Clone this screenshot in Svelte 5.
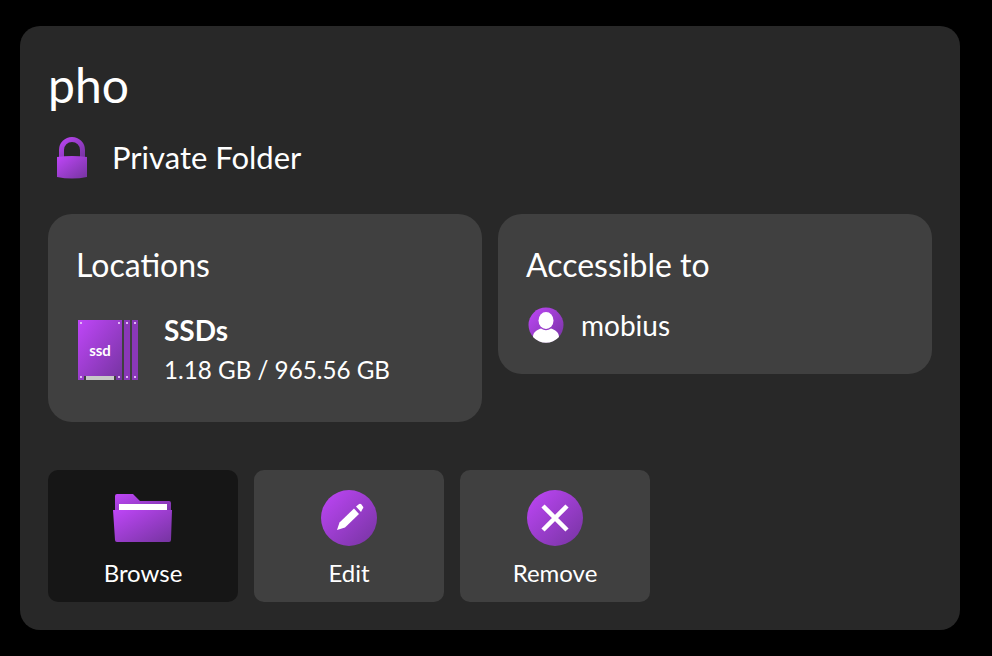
<script lang="ts">
  const actions = [
    { label: 'Browse', icon: 'folder', active: true },
    { label: 'Edit', icon: 'edit', active: false },
    { label: 'Remove', icon: 'remove', active: false }
  ]
</script>

<svg class="defs" width="0" height="0" aria-hidden="true">
  <defs>
    <linearGradient id="purple" x1="0" y1="0" x2="1" y2="1">
      <stop offset="0" stop-color="#bf46f8" />
      <stop offset="1" stop-color="#7534a0" />
    </linearGradient>
  </defs>
</svg>

<main class="page">
  <section class="card">
    <h1 class="title">pho</h1>

    <div class="privacy">
      <svg class="lock" width="32" height="44" viewBox="0 0 32 44">
        <path d="M3 22 V15 a13 13 0 0 1 26 0 V22 h-5 V15 a8 8 0 0 0 -16 0 V22 Z" fill="url(#purple)" />
        <path d="M1 22 Q16 20 31 22 V42 Q16 45 1 42 Z" fill="url(#purple)" />
      </svg>
      <span>Private Folder</span>
    </div>

    <div class="panels">
      <div class="panel locations">
        <h2>Locations</h2>
        <div class="location">
          <svg width="62" height="62" viewBox="0 0 62 62">
            <rect x="1" y="1" width="44" height="60" fill="url(#purple)" />
            <rect x="47" y="1" width="6" height="60" fill="#8a38b8" />
            <rect x="55" y="1" width="6" height="60" fill="#8a38b8" />
            <rect x="9" y="57" width="28" height="4" fill="#c8c8c8" />
            <rect x="7" y="57" width="2" height="4" fill="#404040" />
            <rect x="37" y="57" width="2" height="4" fill="#404040" />
            <g fill="#e0b6f5">
              <rect x="3" y="3" width="2" height="2" /><rect x="41" y="3" width="2" height="2" />
              <rect x="3" y="57" width="2" height="2" /><rect x="41" y="57" width="2" height="2" />
              <rect x="49" y="3" width="2" height="2" /><rect x="57" y="3" width="2" height="2" />
              <rect x="49" y="57" width="2" height="2" /><rect x="57" y="57" width="2" height="2" />
            </g>
            <text x="23" y="37" class="ssd-label" text-anchor="middle">ssd</text>
          </svg>
          <div class="location-text">
            <strong>SSDs</strong>
            <span>1.18 GB / 965.56 GB</span>
          </div>
        </div>
      </div>

      <div class="panel access">
        <h2>Accessible to</h2>
        <div class="user">
          <svg width="36" height="36" viewBox="0 0 36 36">
            <circle cx="18" cy="18" r="17.500" fill="url(#purple)" />
            <ellipse cx="18" cy="13.500" rx="7.500" ry="8.500" fill="#fff" />
            <path d="M5 30 C5 25 9 23 13 21.500 Q18 25 23 21.500 C27 23 31 25 31 30 A17.500 17.500 0 0 1 5 30 Z" fill="#fff" />
          </svg>
          <span>mobius</span>
        </div>
      </div>
    </div>

    <div class="actions">
      {#each actions as action}
        <button class="action" class:active={action.active}>
          {#if action.icon === 'folder'}
            <svg width="62" height="56" viewBox="0 0 62 56">
              <path d="M3 6 a2 2 0 0 1 2 -2 H21 L28 11 H57 a2 2 0 0 1 2 2 V24 H3 Z" fill="url(#purple)" />
              <rect x="7" y="14" width="48" height="6" fill="#fff" />
              <path d="M1 20 H60 L59 50 a2 2 0 0 1 -2 2 H5 a2 2 0 0 1 -2 -2 Z" fill="url(#purple)" />
            </svg>
          {:else if action.icon === 'edit'}
            <svg width="56" height="56" viewBox="0 0 56 56">
              <circle cx="28" cy="28" r="28" fill="url(#purple)" />
              <path d="M16 40 L18.500 32.500 L33 18.500 L38 24 L24 37.500 Z" fill="#fff" />
              <path d="M35 16.500 L37.500 14.500 a2 2 0 0 1 3 0 L41.500 16 a2 2 0 0 1 0 3 L40 22 Z" fill="#fff" />
            </svg>
          {:else}
            <svg width="56" height="56" viewBox="0 0 56 56">
              <circle cx="28" cy="28" r="28" fill="url(#purple)" />
              <path d="M16 16 L40 40 M40 16 L16 40" stroke="#fff" stroke-width="4.500" />
            </svg>
          {/if}
          <span>{action.label}</span>
        </button>
      {/each}
    </div>
  </section>
</main>

<style>
  :global(body) {
    margin: 0;
    background: #000;
  }

  .defs {
    position: absolute;
  }

  .page {
    padding: 26px 32px 26px 20px;
    font-family: 'Lato', 'Open Sans', sans-serif;
    color: #fff;
  }

  .card {
    background: #282828;
    border-radius: 20px;
    height: 604px;
    box-sizing: border-box;
    padding: 28px;
    display: flex;
    flex-direction: column;
  }

  .title {
    margin: 0;
    font-size: 48px;
    font-weight: 400;
    line-height: 62px;
  }

  .privacy {
    display: flex;
    align-items: center;
    gap: 24px;
    margin-top: 19px;
    padding-left: 8px;
    height: 44px;
    font-size: 31px;
  }

  .panels {
    display: grid;
    grid-template-columns: 434px 434px;
    gap: 16px;
    align-items: start;
    margin-top: 35px;
  }

  .panel {
    background: #404040;
    border-radius: 24px;
    padding: 28px;
    box-sizing: border-box;
  }

  .panel h2 {
    margin: -1px 0 0;
    font-size: 32px;
    font-weight: 400;
    line-height: 48px;
  }

  .locations {
    height: 208px;
  }

  .access {
    height: 160px;
  }

  .location {
    display: flex;
    align-items: center;
    gap: 25px;
    margin-top: 21px;
    padding-left: 1px;
  }

  .ssd-label {
    font-family: 'Lato', sans-serif;
    font-size: 15px;
    font-weight: 700;
    fill: #fff;
  }

  .location-text {
    display: flex;
    flex-direction: column;
    font-size: 24.2px;
    line-height: 40px;
  }

  .location-text strong {
    font-size: 28px;
    font-weight: 700;
  }

  .user {
    display: flex;
    align-items: center;
    gap: 17px;
    margin-top: 18px;
    padding-left: 2px;
    font-size: 28px;
  }

  .actions {
    display: flex;
    gap: 16px;
    margin-top: 48px;
  }

  .action {
    width: 190px;
    height: 132px;
    background: #404040;
    border: none;
    border-radius: 10px;
    color: #fff;
    font-family: inherit;
    font-size: 24px;
    display: flex;
    flex-direction: column;
    align-items: center;
    justify-content: flex-start;
    padding: 20px 0 0;
  }

  .action.active {
    background: #161616;
  }

  .action span {
    margin-top: 12px;
  }
</style>
